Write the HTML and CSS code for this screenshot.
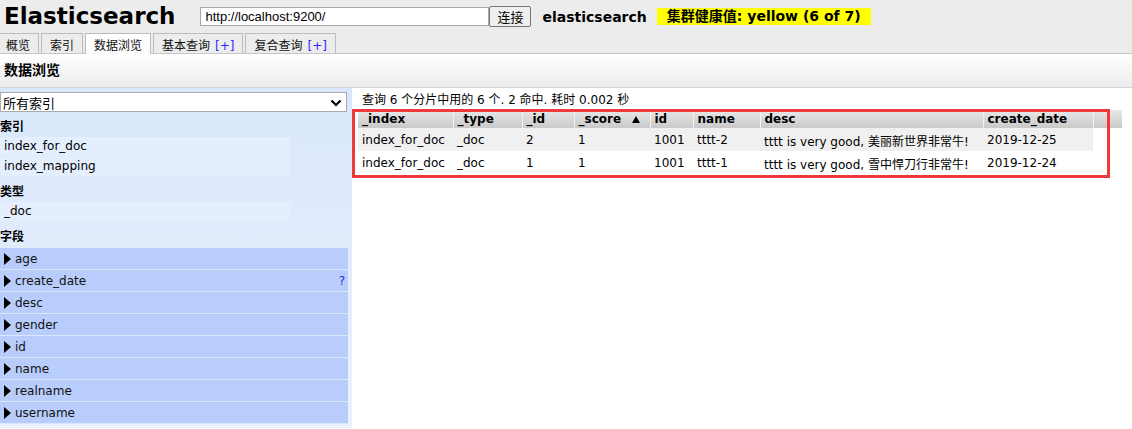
FILE: index.html
```html
<!DOCTYPE html>
<html lang="zh">
<head>
<meta charset="utf-8">
<title>Elasticsearch</title>
<link rel="stylesheet" href="styles.css">
</head>
<body>
<div class="top">
  <div class="bar">
    <h1 class="logo">Elasticsearch</h1>
    <input class="url" type="text" value="http://localhost:9200/">
    <button class="connect">连接</button>
    <span class="cluster">elasticsearch</span>
    <span class="health">集群健康值: yellow (6 of 7)</span>
  </div>
  <div class="tabs">
    <div class="tab">概览</div>
    <div class="tab">索引</div>
    <div class="tab active">数据浏览</div>
    <div class="tab">基本查询<span class="plus">[+]</span></div>
    <div class="tab">复合查询<span class="plus">[+]</span></div>
  </div>
</div>
<div class="section-head">数据浏览</div>
<div class="main">
  <aside class="side">
    <div class="select-wrap">
      <select class="index-select"><option>所有索引</option></select>
      <svg class="chev" width="12" height="8" viewBox="0 0 12 8"><path d="M1.5 1.5 L6 6 L10.5 1.5" fill="none" stroke="#000" stroke-width="2.2"/></svg>
    </div>
    <div class="side-h">索引</div>
    <div class="side-item">index_for_doc</div>
    <div class="side-item">index_mapping</div>
    <div class="side-h">类型</div>
    <div class="side-item">_doc</div>
    <div class="side-h last">字段</div>
    <div class="field"><span class="tri"></span><span class="fname">age</span></div>
    <div class="field"><span class="tri"></span><span class="fname">create_date</span><span class="q">?</span></div>
    <div class="field"><span class="tri"></span><span class="fname">desc</span></div>
    <div class="field"><span class="tri"></span><span class="fname">gender</span></div>
    <div class="field"><span class="tri"></span><span class="fname">id</span></div>
    <div class="field"><span class="tri"></span><span class="fname">name</span></div>
    <div class="field"><span class="tri"></span><span class="fname">realname</span></div>
    <div class="field"><span class="tri"></span><span class="fname">username</span></div>
  </aside>
  <section class="results">
    <div class="info">查询 6 个分片中用的 6 个. 2 命中. 耗时 0.002 秒</div>
    <table class="grid">
      <thead>
        <tr>
          <th class="w-index">_index</th>
          <th class="w-type">_type</th>
          <th class="w-id">_id</th>
          <th class="w-score"><div class="sorted"><span>_score</span><span class="up"></span></div></th>
          <th class="w-id2">id</th>
          <th class="w-name">name</th>
          <th class="w-desc">desc</th>
          <th class="w-date">create_date</th>
          <th class="w-fill"></th>
        </tr>
      </thead>
      <tbody>
        <tr class="odd">
          <td>index_for_doc</td><td>_doc</td><td>2</td><td>1</td><td>1001</td><td>tttt-2</td><td>tttt is very good, 美丽新世界非常牛!</td><td>2019-12-25</td>
        </tr>
        <tr>
          <td>index_for_doc</td><td>_doc</td><td>1</td><td>1</td><td>1001</td><td>tttt-1</td><td>tttt is very good, 雪中悍刀行非常牛!</td><td>2019-12-24</td>
        </tr>
      </tbody>
    </table>
    <div class="mark"></div>
  </section>
</div>
</body>
</html>
```
FILE: styles.css
```css
html, body {
  margin: 0;
  padding: 0;
}
body {
  font-family: "DejaVu Sans", "Noto Sans CJK SC", sans-serif;
  font-size: 12px;
  color: #000;
  background: #fff;
  overflow: hidden;
  height: 429px;
}

/* header */
.top {
  background: #ececec;
  border-bottom: 1px solid #c6c6c6;
}
.bar {
  height: 33px;
  display: flex;
  align-items: center;
  padding-left: 4px;
}
.logo {
  margin: 0 25px 0 0;
  font-size: 23px;
  font-weight: bold;
  line-height: 33px;
}
.url {
  width: 289px;
  height: 19px;
  box-sizing: border-box;
  margin: 0;
  padding: 0 4px;
  border: 1px solid #a9a9a9;
  background: #fff;
  font: 13px "Liberation Sans", Arial, sans-serif;
  color: #000;
}
.connect {
  width: 42px;
  height: 21px;
  margin: 0;
  padding: 0;
  border: 1px solid #767676;
  border-radius: 2px;
  background: #efefef;
  font: 13px "Noto Sans CJK SC", sans-serif;
  color: #000;
}
.cluster {
  margin-left: 11px;
  font-size: 14px;
  font-weight: bold;
}
.health {
  margin-left: 10px;
  padding: 0 10px;
  background: #ffff00;
  font-size: 14px;
  font-weight: bold;
  line-height: 17px;
}

.tabs {
  display: flex;
  align-items: flex-end;
  gap: 2px;
  height: 20px;
  margin-left: -3px;
}
.tab {
  box-sizing: border-box;
  height: 20px;
  padding: 4px 8px 0;
  line-height: 16px;
  border: 1px solid #bcbcbc;
  border-bottom: none;
  background: #ececec;
  color: #111;
  white-space: nowrap;
}
.tab.active {
  height: 21px;
  margin-bottom: -1px;
  background: linear-gradient(#ffffff, #fbfbfb);
}
.plus {
  margin-left: 5px;
  color: #2a2aff;
}

/* section title */
.section-head {
  height: 33px;
  line-height: 33px;
  padding-left: 4px;
  font-size: 14px;
  font-weight: bold;
  background: linear-gradient(#ffffff, #ececec);
  border-bottom: 1px solid #d2d6dc;
}

.main {
  display: flex;
  height: 340px;
}

/* sidebar */
.side {
  width: 352px;
  flex: none;
  box-sizing: border-box;
  padding-top: 4px;
  background: linear-gradient(#d9e6fb, #ebf2fe);
}
.select-wrap {
  position: relative;
  width: 347px;
  height: 20px;
}
.index-select {
  appearance: none;
  -webkit-appearance: none;
  width: 100%;
  height: 20px;
  box-sizing: border-box;
  margin: 0;
  padding: 0 2px;
  border: 1px solid #a9a9a9;
  background: #fff;
  font: 13px "Noto Sans CJK SC", sans-serif;
  color: #000;
}
.chev {
  position: absolute;
  right: 5px;
  top: 7px;
}
.side-h {
  height: 25px;
  box-sizing: border-box;
  padding-top: 5px;
  line-height: 20px;
  font-weight: bold;
}
.side-h.last {
  height: 26px;
}
.side-item {
  width: 290px;
  height: 19px;
  line-height: 19px;
  padding-left: 4px;
  box-sizing: border-box;
  margin-bottom: 1px;
  border-radius: 3px;
  background: #e5eefd;
}
.field {
  width: 348px;
  height: 22px;
  box-sizing: border-box;
  border-bottom: 1px solid #dbe7fd;
  background: #b8cdfb;
  display: flex;
  align-items: center;
  padding: 0 3px 0 4px;
}
.tri {
  width: 0;
  height: 0;
  border-left: 7px solid #000;
  border-top: 6px solid transparent;
  border-bottom: 6px solid transparent;
}
.fname {
  margin-left: 4px;
  color: #111;
}
.q {
  margin-left: auto;
  color: #2a2aef;
}

/* results */
.results {
  position: relative;
  flex: 1;
  padding: 4px 0 0 6px;
}
.info {
  padding-left: 4px;
  line-height: 16px;
  margin-bottom: 2px;
}
.grid {
  border-collapse: collapse;
  table-layout: fixed;
  width: 764px;
}
.grid th {
  box-sizing: border-box;
  height: 18px;
  padding: 0 4px;
  text-align: left;
  font-weight: bold;
  background: linear-gradient(#e8e8e8, #c9c9c9);
  border-left: 1px solid #f2f2f2;
  white-space: nowrap;
}
.grid th:first-child {
  border-left: none;
}
.grid td {
  height: 22px;
  padding: 1px 4px 0;
  white-space: nowrap;
  overflow: hidden;
}
.grid tr.odd td {
  background: #f0f0f0;
}
.w-index { width: 95px; }
.w-type { width: 69px; }
.w-id { width: 52px; }
.w-score { width: 76px; }
.w-id2 { width: 43px; }
.w-name { width: 67px; }
.w-desc { width: 223px; }
.w-date { width: 110px; }
.w-fill { width: 29px; }
.sorted {
  display: flex;
  justify-content: space-between;
  align-items: center;
}
.up {
  width: 0;
  height: 0;
  margin-right: 6px;
  border-bottom: 7px solid #000;
  border-left: 4px solid transparent;
  border-right: 4px solid transparent;
}

/* annotation rectangle overlay */
.mark {
  position: absolute;
  left: 0;
  top: 21px;
  width: 758px;
  height: 69px;
  box-sizing: border-box;
  border: 3px solid #ef3a3b;
  pointer-events: none;
}
```
